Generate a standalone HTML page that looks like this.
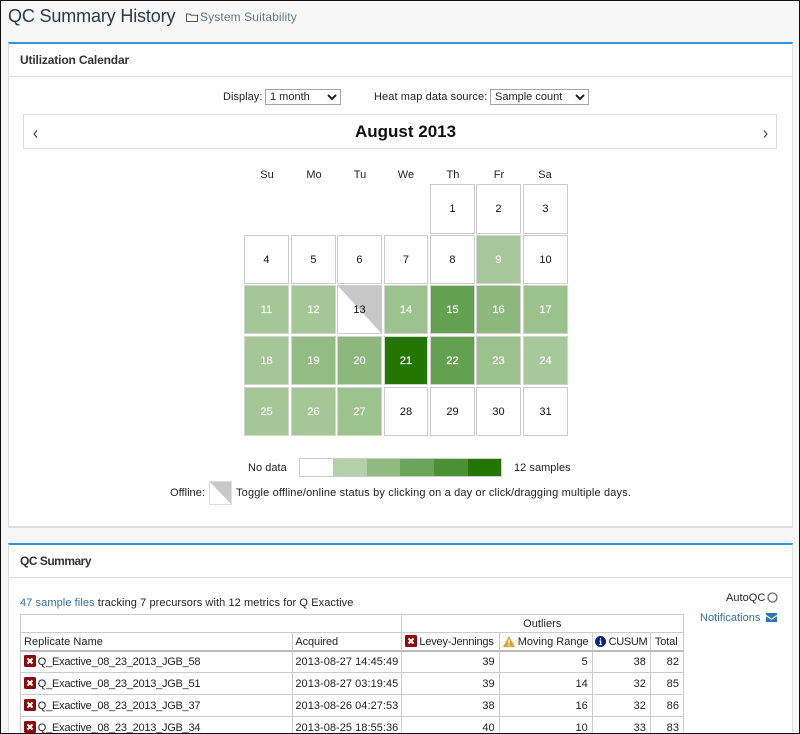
<!DOCTYPE html>
<html><head><meta charset="utf-8"><title>QC Summary History</title>
<style>
*{box-sizing:border-box}
html,body{margin:0;padding:0;background:#f7f7f7;overflow:hidden;width:800px;height:734px}
#w{width:800px;height:734px;position:relative;overflow:hidden;font:11px/14px "Liberation Sans",sans-serif;color:#222;letter-spacing:.04px}
.t{position:absolute;white-space:nowrap}
.p{position:absolute;left:8px;width:785px;background:#fff;border:1px solid #ddd;border-top:2px solid #3495d0}
.hr{position:absolute;left:9px;width:783px;height:1px;background:#ddd}
.h{position:absolute;left:20px;font-weight:bold;font-size:12px;line-height:16px;color:#333}
.d{position:absolute;display:flex;align-items:center;justify-content:center;border:1px solid #ccc;color:#111;background:#fff}
.g{color:#f1f6ee;border-color:#d4d4d4;-webkit-text-stroke:.25px #f1f6ee}
.c{position:absolute;width:46px;text-align:center;top:168px}
select{position:absolute;height:16px;font:11px "Liberation Sans",sans-serif;border:1px solid #a5a5a5;background:#fff;color:#222;padding:0;border-radius:0}
table{position:absolute;left:20px;top:614px;width:664px;border-collapse:collapse;table-layout:fixed;background:#fff}
td,th{border:1px solid #ccc;padding:1px 4px 0;font-weight:normal;text-align:left;white-space:nowrap;overflow:hidden;color:#222;height:22px}
tr.a th{height:18px}
tr.b th{height:18px;border-bottom:2px solid #bbb;padding:2px 4px 0 3px;letter-spacing:-.1px}
td.n{text-align:right}
td.r{padding-left:3px;letter-spacing:-.25px}
td.r svg{margin-right:-1px}
td.q{padding-left:2px}
svg{vertical-align:-2px}
#frame{position:absolute;left:0;top:0;width:800px;height:734px;border:1px solid #111;pointer-events:none}
</style></head><body><div id="w">
<div class="t" style="left:8px;top:4px;font-size:18px;line-height:24px;color:#2a3a48;letter-spacing:-.15px">QC Summary History</div>
<svg class="t" style="left:186px;top:13px" width="12" height="9" viewBox="0 0 12 9"><path d="M.5 1h3.500l1 1.200h6.500v6.300h-11z" fill="none" stroke="#555" stroke-width="1"/></svg>
<div class="t" style="left:200px;top:9px;font-size:12px;line-height:16px;color:#6b7680;letter-spacing:.12px">System Suitability</div>

<div class="p" style="top:42px;height:486px;border-bottom:2px solid #ddd"></div>
<div class="hr" style="top:76px"></div>
<div class="h" style="top:52px;letter-spacing:-.15px">Utilization Calendar</div>

<div class="t" style="left:223px;top:90px">Display:</div>
<select style="left:265px;top:89px;width:76px"><option>1 month</option></select>
<div class="t" style="left:374px;top:90px;letter-spacing:.1px">Heat map data source:</div>
<select style="left:490px;top:89px;width:99px"><option>Sample count</option></select>

<div class="t" style="left:23px;top:114px;width:754px;height:35px;border:1px solid #ddd"></div>
<svg class="t" style="left:33px;top:130px" width="5" height="8" viewBox="0 0 5 8"><path d="M4 .5L1 4l3 3.500" fill="none" stroke="#333" stroke-width="1"/></svg>
<svg class="t" style="left:763px;top:130px" width="5" height="8" viewBox="0 0 5 8"><path d="M1 .5L4 4 1 7.500" fill="none" stroke="#333" stroke-width="1"/></svg>
<div class="t" style="left:355px;top:121px;font-size:17px;line-height:22px;font-weight:bold;color:#111;letter-spacing:0">August 2013</div>

<div class="c t" style="left:244px">Su</div>
<div class="c t" style="left:291px">Mo</div>
<div class="c t" style="left:337px">Tu</div>
<div class="c t" style="left:383px">We</div>
<div class="c t" style="left:430px">Th</div>
<div class="c t" style="left:476px">Fr</div>
<div class="c t" style="left:522px">Sa</div>

<div class="d" style="left:430px;top:184px;width:45px;height:50px">1</div>
<div class="d" style="left:476px;top:184px;width:45px;height:50px">2</div>
<div class="d" style="left:523px;top:184px;width:45px;height:50px">3</div>

<div class="d" style="left:244px;top:235px;width:45px;height:49px">4</div>
<div class="d" style="left:291px;top:235px;width:45px;height:49px">5</div>
<div class="d" style="left:337px;top:235px;width:45px;height:49px">6</div>
<div class="d" style="left:384px;top:235px;width:44px;height:49px">7</div>
<div class="d" style="left:430px;top:235px;width:45px;height:49px">8</div>
<div class="d g" style="left:476px;top:235px;width:45px;height:49px;background:#a7c89a">9</div>
<div class="d" style="left:523px;top:235px;width:45px;height:49px">10</div>

<div class="d g" style="left:244px;top:285px;width:45px;height:49px;background:#a5c798">11</div>
<div class="d g" style="left:291px;top:285px;width:45px;height:49px;background:#a5c798">12</div>
<div class="d" style="left:337px;top:285px;width:45px;height:49px;background:linear-gradient(to top right,#fff 49.500%,#c8c8c8 50.500%)">13</div>
<div class="d g" style="left:384px;top:285px;width:44px;height:49px;background:#9cc28e">14</div>
<div class="d g" style="left:430px;top:285px;width:45px;height:49px;background:#63a04f">15</div>
<div class="d g" style="left:476px;top:285px;width:45px;height:49px;background:#8db87d">16</div>
<div class="d g" style="left:523px;top:285px;width:45px;height:49px;background:#9bc28d">17</div>

<div class="d g" style="left:244px;top:336px;width:45px;height:49px;background:#a5c798">18</div>
<div class="d g" style="left:291px;top:336px;width:45px;height:49px;background:#94bc85">19</div>
<div class="d g" style="left:337px;top:336px;width:45px;height:49px;background:#8db87d">20</div>
<div class="d g" style="left:384px;top:336px;width:44px;height:49px;background:#237700;color:#fff">21</div>
<div class="d g" style="left:430px;top:336px;width:45px;height:49px;background:#63a04f">22</div>
<div class="d g" style="left:476px;top:336px;width:45px;height:49px;background:#9bc28d">23</div>
<div class="d g" style="left:523px;top:336px;width:45px;height:49px;background:#a7c89a">24</div>

<div class="d g" style="left:244px;top:387px;width:45px;height:49px;background:#a5c798">25</div>
<div class="d g" style="left:291px;top:387px;width:45px;height:49px;background:#a5c798">26</div>
<div class="d g" style="left:337px;top:387px;width:45px;height:49px;background:#9cc28e">27</div>
<div class="d" style="left:384px;top:387px;width:44px;height:49px">28</div>
<div class="d" style="left:430px;top:387px;width:45px;height:49px">29</div>
<div class="d" style="left:476px;top:387px;width:45px;height:49px">30</div>
<div class="d" style="left:523px;top:387px;width:45px;height:49px">31</div>

<div class="t" style="left:248px;top:461px">No data</div>
<div class="t" style="left:299px;top:458px;width:203px;height:19px;border:1px solid #ccc;background:linear-gradient(to right,#fff 0 33px,#b3d0a8 33px 67px,#90ba80 67px 100px,#6aa55a 100px 134px,#4a9035 134px 168px,#237700 168px)"></div>
<div class="t" style="left:514px;top:461px">12 samples</div>
<div class="t" style="left:170px;top:486px">Offline:</div>
<div class="t" style="left:209px;top:481px;width:23px;height:24px;border:1px solid #ddd;background:linear-gradient(to top right,#fff 49.500%,#c8c8c8 50.500%)"></div>
<div class="t" style="left:236px;top:486px;letter-spacing:.16px">Toggle offline/online status by clicking on a day or click/dragging multiple days.</div>

<div class="p" style="top:543px;height:200px"></div>
<div class="hr" style="top:577px"></div>
<div class="h" style="top:553px;letter-spacing:-.5px">QC Summary</div>
<div class="t" style="left:20px;top:596px;letter-spacing:.085px"><span style="color:#3a6f9c">47 sample files</span> tracking 7 precursors with 12 metrics for Q Exactive</div>
<div class="t" style="left:726px;top:591px">AutoQC</div>
<svg class="t" style="left:767px;top:592px" width="11" height="11" viewBox="0 0 11 11"><circle cx="5.500" cy="5.500" r="4.500" fill="none" stroke="#666" stroke-width="1.300"/></svg>
<div class="t" style="left:700px;top:611px;color:#3a6f9c">Notifications</div>
<svg class="t" style="left:766px;top:613px" width="11" height="9" viewBox="0 0 11 9"><path d="M0 0h11v1.800L5.500 5.500 0 1.800zM0 3.200l5.500 3.700L11 3.200V9H0z" fill="#2f78b5"/></svg>

<table>
<colgroup><col style="width:272px"><col style="width:108px"><col style="width:98px"><col style="width:93px"><col style="width:58px"><col style="width:33px"></colgroup>
<tr class="a"><th colspan="2"></th><th colspan="4" style="text-align:center">Outliers</th></tr>
<tr class="b"><th style="letter-spacing:.05px">Replicate Name</th><th style="padding-left:2px">Acquired</th>
<th style="letter-spacing:-.2px"><svg width="12" height="12" viewBox="0 0 12 12"><rect width="12" height="12" rx="1.500" fill="#8b0a0a"/><path d="M3.500 3.500l5 5m0-5l-5 5" stroke="#fff" stroke-width="2"/></svg> Levey-Jennings</th>
<th style="letter-spacing:0"><svg width="12" height="11" viewBox="0 0 12 11"><path d="M6 0l6 11H0z" fill="#e0a030"/><path d="M6 3.500v4M6 8.500v1.500" stroke="#fff" stroke-width="1.300"/></svg> Moving Range</th>
<th style="padding-left:2px;letter-spacing:-.3px"><svg width="11" height="11" viewBox="0 0 11 11"><circle cx="5.500" cy="5.500" r="5.500" fill="#10207f"/><path d="M5.500 2v1.500M4.500 5h1.200v3.500M4.300 8.500h2.500" stroke="#fff" stroke-width="1.200" fill="none"/></svg> CUSUM</th>
<th style="padding-left:4px">Total</th></tr>
<tr><td class="r"><svg width="12" height="12" viewBox="0 0 12 12"><rect width="12" height="12" rx="1.500" fill="#8b0a0a"/><path d="M3.500 3.500l5 5m0-5l-5 5" stroke="#fff" stroke-width="2"/></svg> Q_Exactive_08_23_2013_JGB_58</td><td class="q">2013-08-27 14:45:49</td><td class="n">39</td><td class="n">5</td><td class="n">38</td><td class="n">82</td></tr>
<tr><td class="r"><svg width="12" height="12" viewBox="0 0 12 12"><rect width="12" height="12" rx="1.500" fill="#8b0a0a"/><path d="M3.500 3.500l5 5m0-5l-5 5" stroke="#fff" stroke-width="2"/></svg> Q_Exactive_08_23_2013_JGB_51</td><td class="q">2013-08-27 03:19:45</td><td class="n">39</td><td class="n">14</td><td class="n">32</td><td class="n">85</td></tr>
<tr><td class="r"><svg width="12" height="12" viewBox="0 0 12 12"><rect width="12" height="12" rx="1.500" fill="#8b0a0a"/><path d="M3.500 3.500l5 5m0-5l-5 5" stroke="#fff" stroke-width="2"/></svg> Q_Exactive_08_23_2013_JGB_37</td><td class="q">2013-08-26 04:27:53</td><td class="n">38</td><td class="n">16</td><td class="n">32</td><td class="n">86</td></tr>
<tr><td class="r"><svg width="12" height="12" viewBox="0 0 12 12"><rect width="12" height="12" rx="1.500" fill="#8b0a0a"/><path d="M3.500 3.500l5 5m0-5l-5 5" stroke="#fff" stroke-width="2"/></svg> Q_Exactive_08_23_2013_JGB_34</td><td class="q">2013-08-25 18:55:36</td><td class="n">40</td><td class="n">10</td><td class="n">33</td><td class="n">83</td></tr>
</table>
<div id="frame"></div>
</div></body></html>
